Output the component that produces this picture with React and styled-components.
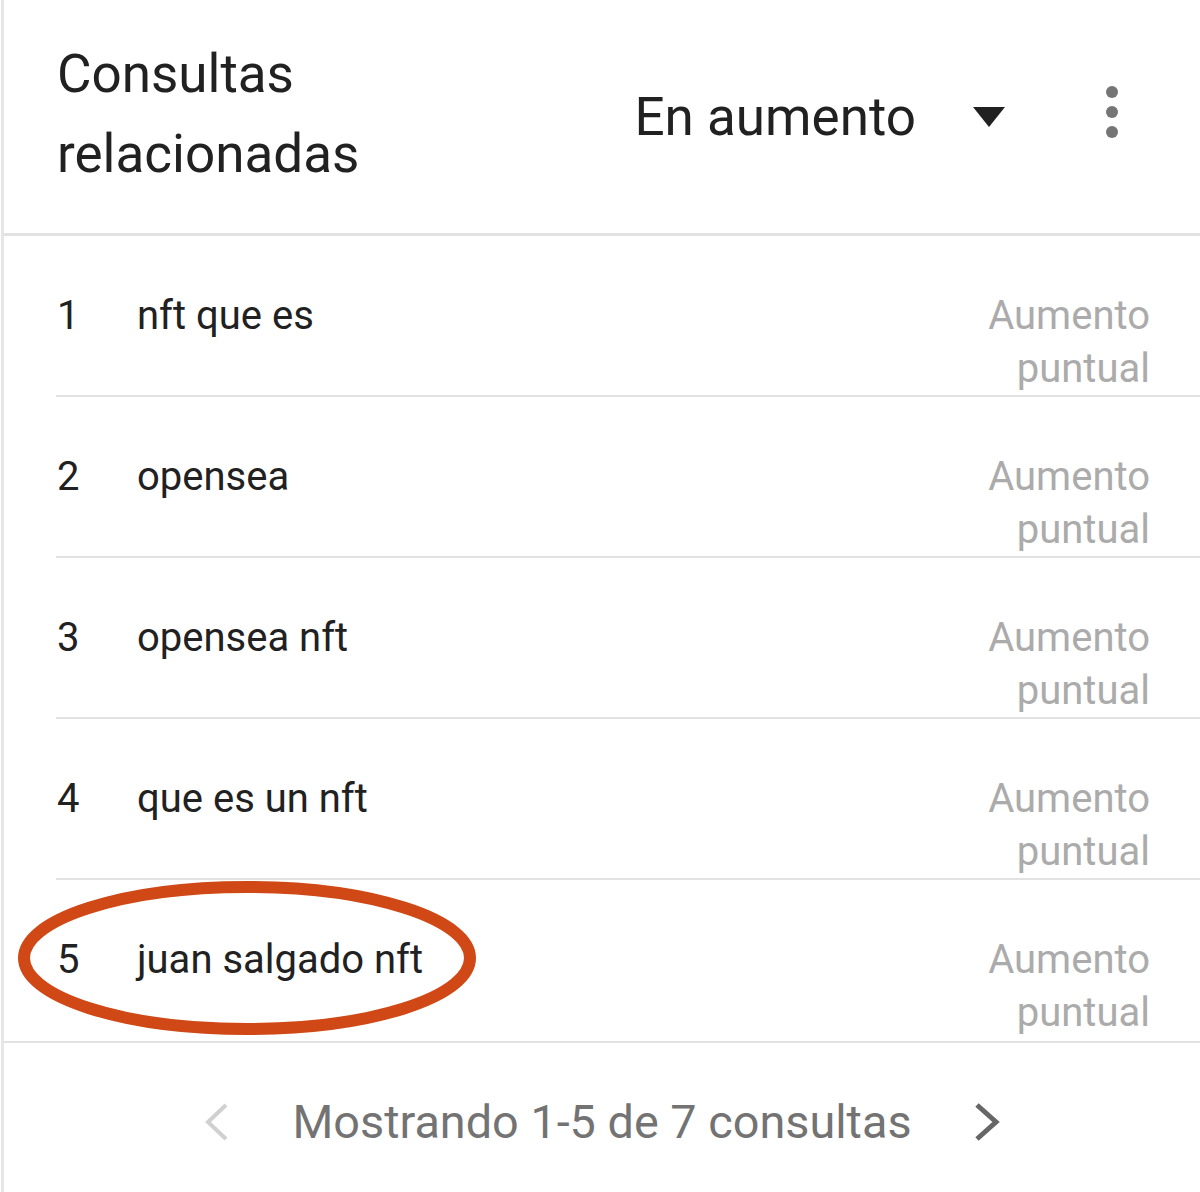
import React from 'react';
import styled, { createGlobalStyle } from 'styled-components';

const GlobalStyle = createGlobalStyle`
    body {
        margin: 0;
        background: #ffffff;
        font-family: Roboto, "Liberation Sans", sans-serif;
    }
`

const Card = styled.div`
    margin-left: 1px;
    border-left: 3px solid #e6e6e6;
    background: #ffffff;
    height: 1192px;
    display: flex;
    flex-direction: column;
    position: relative;
`

const Header = styled.div`
    height: 236px;
    box-sizing: border-box;
    border-bottom: 3px solid #e2e2e2;
    display: flex;
    align-items: center;
    padding: 0 82px 0 53px;
`

const Title = styled.div`
    flex: 1;
    font-size: 53px;
    line-height: 80px;
    color: #212121;
    margin-top: -5px;
`

const Select = styled.div`
    display: flex;
    align-items: center;
    gap: 57px;
    font-size: 53px;
    color: #212121;
`

const Caret = styled.span`
    width: 0;
    height: 0;
    border-left: 16px solid transparent;
    border-right: 16px solid transparent;
    border-top: 20px solid #212121;
`

const MoreButton = styled.div`
    margin-left: 101px;
    display: flex;
    flex-direction: column;
    gap: 8px;
    margin-top: -10px;
`

const Dot = styled.span`
    width: 12px;
    height: 12px;
    border-radius: 50%;
    background: #757575;
`

const List = styled.div`
    display: flex;
    flex-direction: column;
`

const Row = styled.div`
    position: relative;
    height: 161px;
    box-sizing: border-box;
    padding: 53px 50px 0 0;
    margin-left: 52px;
    display: flex;
    align-items: flex-start;
    border-bottom: ${p => (p.last ? 'none' : '2px solid #e2e2e2')};
`

const Rank = styled.div`
    width: 80px;
    padding-left: 1px;
    font-size: 40px;
    line-height: 53px;
    color: #212121;
`

const Query = styled.div`
    flex: 1;
    font-size: 40px;
    line-height: 53px;
    color: #212121;
`

const Value = styled.div`
    text-align: right;
    font-size: 40px;
    line-height: 53px;
    color: #ababab;
`

const Highlight = styled.svg`
    position: absolute;
    left: -39px;
    top: 0;
    width: 460px;
    height: 158px;
    overflow: visible;
`

const Footer = styled.div`
    flex: 1;
    border-top: 2px solid #e2e2e2;
    display: flex;
    align-items: center;
    justify-content: center;
    gap: 60px;
    padding-top: 8px;
`

const PageText = styled.div`
    font-size: 46.8px;
    color: #737373;
`

const Chevron = styled.svg`
    width: 30px;
    height: 40px;
`

const queries = [
    { rank: 1, term: 'nft que es' },
    { rank: 2, term: 'opensea' },
    { rank: 3, term: 'opensea nft' },
    { rank: 4, term: 'que es un nft' },
    { rank: 5, term: 'juan salgado nft', circled: true },
]

export default function App() {
    return (
        <>
            <GlobalStyle />
            <Card>
                <Header>
                    <Title>Consultas<br />relacionadas</Title>
                    <Select>
                        <span>En aumento</span>
                        <Caret />
                    </Select>
                    <MoreButton>
                        <Dot />
                        <Dot />
                        <Dot />
                    </MoreButton>
                </Header>
                <List>
                    {queries.map((q, i) => (
                        <Row key={q.rank} last={i === queries.length - 1}>
                            <Rank>{q.rank}</Rank>
                            <Query>{q.term}</Query>
                            <Value>Aumento<br />puntual</Value>
                            {q.circled && (
                                <Highlight viewBox="0 0 460 158">
                                    <ellipse cx="230" cy="78" rx="223" ry="71" fill="none" stroke="#cf4816" strokeWidth="12" />
                                </Highlight>
                            )}
                        </Row>
                    ))}
                </List>
                <Footer>
                    <Chevron viewBox="0 0 30 40">
                        <polyline points="24,3 6,20 24,37" fill="none" stroke="#d0d0d0" strokeWidth="4" />
                    </Chevron>
                    <PageText>Mostrando 1-5 de 7 consultas</PageText>
                    <Chevron viewBox="0 0 30 40">
                        <polyline points="5,3 24,20 5,37" fill="none" stroke="#666666" strokeWidth="5" />
                    </Chevron>
                </Footer>
            </Card>
        </>
    )
}
